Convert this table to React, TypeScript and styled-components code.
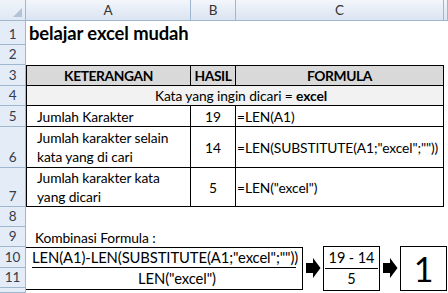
import { Fragment } from "react";
import styled, { createGlobalStyle } from "styled-components";

const GlobalStyle = createGlobalStyle`
  html, body {
    margin: 0;
    padding: 0;
    background: #fff;
  }
  body {
    width: 448px;
    height: 293px;
    overflow: hidden;
    font-family: Lato, "Liberation Sans", sans-serif;
    color: #000;
  }
`;

type Row = {
  n: number;
  label: string;
  hasil: string;
  formula: string;
  tall?: boolean;
};

const rows: Row[] = [
  { n: 5, label: "Jumlah Karakter", hasil: "19", formula: "=LEN(A1)" },
  {
    n: 6,
    label: "Jumlah karakter selain kata yang di cari",
    hasil: "14",
    formula: '=LEN(SUBSTITUTE(A1;"excel";""))',
    tall: true,
  },
  {
    n: 7,
    label: "Jumlah karakter kata yang dicari",
    hasil: "5",
    formula: '=LEN("excel")',
    tall: true,
  },
];

function Arrow() {
  return (
    <ArrowIcon viewBox="0 0 16 22" width="16" height="22">
      <path d="M1 6 H8 V1 L15.5 11 L8 21 V16 H1 Z" fill="#000" />
    </ArrowIcon>
  );
}

function App() {
  return (
    <>
      <GlobalStyle />
      <Sheet>
        <Corner>
          <CornerMark />
        </Corner>
        <ColHead>A</ColHead>
        <ColHead>B</ColHead>
        <ColHead>C</ColHead>
        <ColHead />

        <RowHead>1</RowHead>
        <Title>belajar excel mudah</Title>

        <RowHead>2</RowHead>
        <Blank $span={4} />

        <RowHead>3</RowHead>
        <Th $first>KETERANGAN</Th>
        <Th>HASIL</Th>
        <Th>FORMULA</Th>
        <Blank />

        <RowHead>4</RowHead>
        <Merged>
          <span>
            Kata yang ingin dicari = <b>excel</b>
          </span>
        </Merged>
        <Blank />

        {rows.map((r) => (
          <Fragment key={r.n}>
            <RowHead>{r.n}</RowHead>
            <Td $first $indent>
              <Wrap $tall={r.tall}>{r.label}</Wrap>
            </Td>
            <Td $center>{r.hasil}</Td>
            <Td>{r.formula}</Td>
            <Blank />
          </Fragment>
        ))}

        <RowHead>8</RowHead>
        <Blank $span={4} />

        <RowHead>9</RowHead>
        <Label>Kombinasi Formula :</Label>

        <RowHead>10</RowHead>
        <Strip>
          <FormulaBox>
            <Numerator>LEN(A1)-LEN(SUBSTITUTE(A1;"excel";""))</Numerator>
            <Denominator>LEN("excel")</Denominator>
          </FormulaBox>
          <Arrow />
          <ResultBox $width={57}>
            <SmallNum>19 - 14</SmallNum>
            <SmallDen>5</SmallDen>
          </ResultBox>
          <Arrow />
          <ResultBox $width={47}>
            <Big>1</Big>
          </ResultBox>
        </Strip>

        <RowHead>11</RowHead>
        <RowHead />
        <Blank $span={4} />
      </Sheet>
    </>
  );
}

export default App;

const headBorder = "#9eb6ce";

const Sheet = styled.div`
  display: grid;
  grid-template-columns: 26px 165px 45px 208px 1fr;
  grid-template-rows: 21px 24px 20px 21px 20px 21px 41px 39px 20px 20px 21px 20px 5px;
  width: 448px;
  height: 293px;
  overflow: hidden;
  font-size: 13.8px;
  letter-spacing: -0.1px;
`;

const Corner = styled.div`
  position: relative;
  background: linear-gradient(#f0f4fa, #dfe8f4);
  border-right: 1px solid ${headBorder};
  border-bottom: 1px solid ${headBorder};
  box-sizing: border-box;
`;

const CornerMark = styled.div`
  position: absolute;
  right: 3px;
  bottom: 3px;
  width: 0;
  height: 0;
  border-left: 9px solid transparent;
  border-bottom: 9px solid #b3c4d9;
`;

const ColHead = styled.div`
  display: flex;
  align-items: center;
  justify-content: center;
  background: linear-gradient(#f3f6fb 0%, #e6edf7 50%, #dbe4f1 100%);
  border-right: 1px solid ${headBorder};
  border-bottom: 1px solid ${headBorder};
  box-sizing: border-box;
  color: #333;
  font-size: 13.5px;
`;

const RowHead = styled.div`
  display: flex;
  align-items: flex-end;
  justify-content: center;
  padding-bottom: 1px;
  background: #e4ecf7;
  border-right: 1px solid ${headBorder};
  border-bottom: 1px solid ${headBorder};
  box-sizing: border-box;
  color: #333d4d;
  font-size: 13.5px;
  line-height: 18px;
`;

const Blank = styled.div<{ $span?: number }>`
  grid-column: span ${(p) => p.$span ?? 1};
`;

const Title = styled.div`
  grid-column: span 4;
  display: flex;
  align-items: flex-end;
  padding: 0 0 1px 3px;
  font-size: 18.4px;
  font-weight: 700;
  letter-spacing: -0.1px;
  line-height: 22px;
`;

const Cell = styled.div<{ $first?: boolean }>`
  display: flex;
  align-items: center;
  box-sizing: border-box;
  border-right: 1px solid #000;
  border-bottom: 1px solid #000;
  border-left: ${(p) => (p.$first ? "1px solid #000" : "none")};
  white-space: nowrap;
`;

const Th = styled(Cell)`
  justify-content: center;
  border-top: 1px solid #000;
  background: #d9d9d9;
  font-weight: 700;
  letter-spacing: -0.4px;
`;

const Merged = styled(Cell)`
  grid-column: span 3;
  justify-content: center;
  border-left: 1px solid #000;
  background: #f2f2f2;
  padding-left: 12px;

  b {
    font-weight: 700;
  }
`;

const Td = styled(Cell)<{ $center?: boolean; $indent?: boolean }>`
  justify-content: ${(p) => (p.$center ? "center" : "flex-start")};
  padding-left: ${(p) => (p.$indent ? "10px" : p.$center ? "0" : "1px")};
`;

const Wrap = styled.div<{ $tall?: boolean }>`
  white-space: normal;
  width: ${(p) => (p.$tall ? "145px" : "auto")};
  line-height: 19px;
`;

const Label = styled.div`
  grid-column: span 4;
  display: flex;
  align-items: flex-end;
  padding: 0 0 1px 9px;
`;

const Strip = styled.div`
  grid-column: 2 / span 4;
  grid-row: span 2;
  display: flex;
  align-items: flex-start;
  gap: 2px;
`;

const FormulaBox = styled.div`
  width: 277px;
  height: 43px;
  box-sizing: border-box;
  border: 1px solid #000;
  border-left: none;
  display: flex;
  flex-direction: column;
  align-items: center;
  flex-shrink: 0;
  font-size: 14.8px;
`;

const Numerator = styled.div`
  margin: 0 6px;
  align-self: stretch;
  text-align: center;
  white-space: nowrap;
  border-bottom: 1px solid #000;
  line-height: 19px;
`;

const Denominator = styled.div`
  padding-left: 26px;
  line-height: 21px;
`;

const ArrowIcon = styled.svg`
  flex-shrink: 0;
  margin-top: 10px;
`;

const ResultBox = styled.div<{ $width: number }>`
  width: ${(p) => p.$width}px;
  height: 45px;
  margin-top: -1px;
  box-sizing: border-box;
  border: 1px solid #000;
  display: flex;
  flex-direction: column;
  align-items: center;
  justify-content: center;
  flex-shrink: 0;
  font-size: 14.5px;
`;

const SmallNum = styled.div`
  padding: 0 4px 1px;
  border-bottom: 1px solid #000;
  line-height: 19px;
`;

const SmallDen = styled.div`
  line-height: 20px;
`;

const Big = styled.div`
  font-size: 34px;
  line-height: 40px;
`;
